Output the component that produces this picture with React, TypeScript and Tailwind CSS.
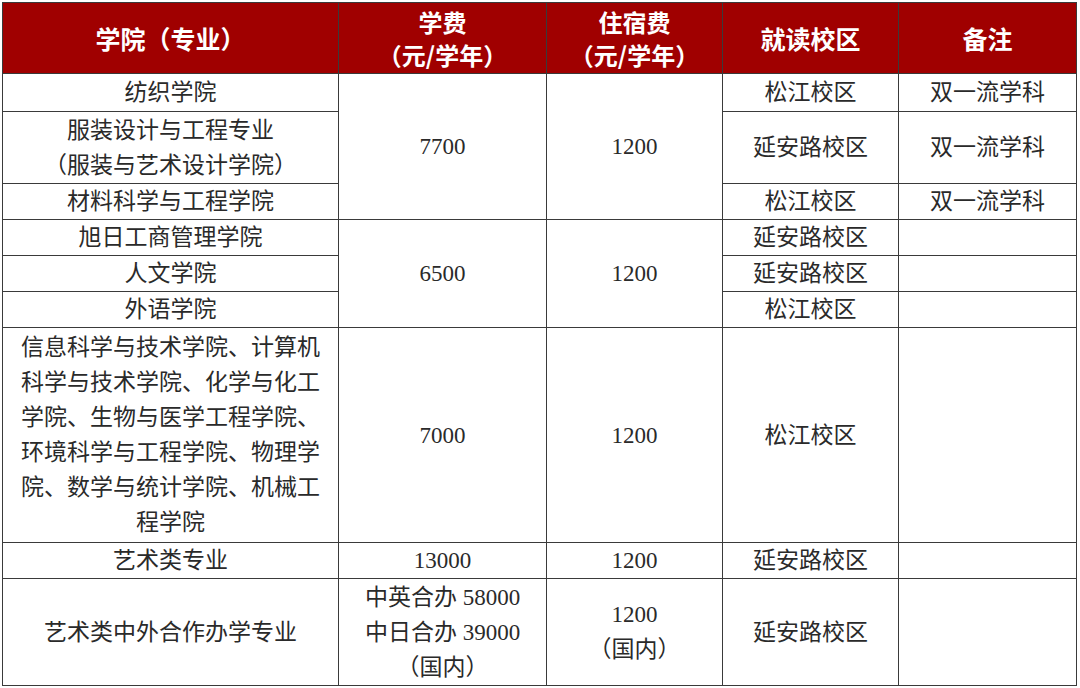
import React from "react";

const serif = "font-['Liberation_Serif','Noto_Sans_CJK_SC',serif]";
const cell = "border border-[#3a3a3a] text-center align-middle px-2 py-0 leading-[35px]";

const head = "border border-[#3a3a3a] text-center align-middle text-white font-bold font-['Noto_Sans_CJK_SC',sans-serif]";
const head1 = `${head} text-[25px] leading-[34px]`;
const head2 = `${head} text-[24px] leading-[33px]`;

export default function App() {
  return (
    <div className="w-[1080px] h-[688px] bg-white pt-[2px] pl-[2px] overflow-hidden">
      <table className={`border-collapse table-fixed text-[23px] text-[#2a2a2a] ${serif}`}>
        <colgroup>
          <col className="w-[336px]" />
          <col className="w-[208px]" />
          <col className="w-[176px]" />
          <col className="w-[176px]" />
          <col className="w-[178px]" />
        </colgroup>
        <thead>
          <tr className="h-[71px] bg-[#a00000]">
            <th className={head1}>学院（专业）</th>
            <th className={head2}>
              <div>学费</div>
              <div>（元/学年）</div>
            </th>
            <th className={head2}>
              <div>住宿费</div>
              <div>（元/学年）</div>
            </th>
            <th className={head1}>就读校区</th>
            <th className={head1}>备注</th>
          </tr>
        </thead>
        <tbody>
          <tr className="h-[38px]">
            <td className={cell}>纺织学院</td>
            <td className={cell} rowSpan={3}>7700</td>
            <td className={cell} rowSpan={3}>1200</td>
            <td className={cell}>松江校区</td>
            <td className={cell}>双一流学科</td>
          </tr>
          <tr className="h-[72px]">
            <td className={cell}>
              服装设计与工程专业
              <br />
              （服装与艺术设计学院）
            </td>
            <td className={cell}>延安路校区</td>
            <td className={cell}>双一流学科</td>
          </tr>
          <tr className="h-[36px]">
            <td className={cell}>材料科学与工程学院</td>
            <td className={cell}>松江校区</td>
            <td className={cell}>双一流学科</td>
          </tr>
          <tr className="h-[36px]">
            <td className={cell}>旭日工商管理学院</td>
            <td className={cell} rowSpan={3}>6500</td>
            <td className={cell} rowSpan={3}>1200</td>
            <td className={cell}>延安路校区</td>
            <td className={cell}></td>
          </tr>
          <tr className="h-[36px]">
            <td className={cell}>人文学院</td>
            <td className={cell}>延安路校区</td>
            <td className={cell}></td>
          </tr>
          <tr className="h-[36px]">
            <td className={cell}>外语学院</td>
            <td className={cell}>松江校区</td>
            <td className={cell}></td>
          </tr>
          <tr className="h-[215px]">
            <td className={`${cell} px-[12px]`}>
              信息科学与技术学院、计算机科学与技术学院、化学与化工学院、生物与医学工程学院、环境科学与工程学院、物理学院、数学与统计学院、机械工程学院
            </td>
            <td className={cell}>7000</td>
            <td className={cell}>1200</td>
            <td className={cell}>松江校区</td>
            <td className={cell}></td>
          </tr>
          <tr className="h-[36px]">
            <td className={cell}>艺术类专业</td>
            <td className={cell}>13000</td>
            <td className={cell}>1200</td>
            <td className={cell}>延安路校区</td>
            <td className={cell}></td>
          </tr>
          <tr className="h-[107px]">
            <td className={cell}>艺术类中外合作办学专业</td>
            <td className={cell}>
              中英合办 58000
              <br />
              中日合办 39000
              <br />
              （国内）
            </td>
            <td className={cell}>
              1200
              <br />
              （国内）
            </td>
            <td className={cell}>延安路校区</td>
            <td className={cell}></td>
          </tr>
        </tbody>
      </table>
    </div>
  );
}
